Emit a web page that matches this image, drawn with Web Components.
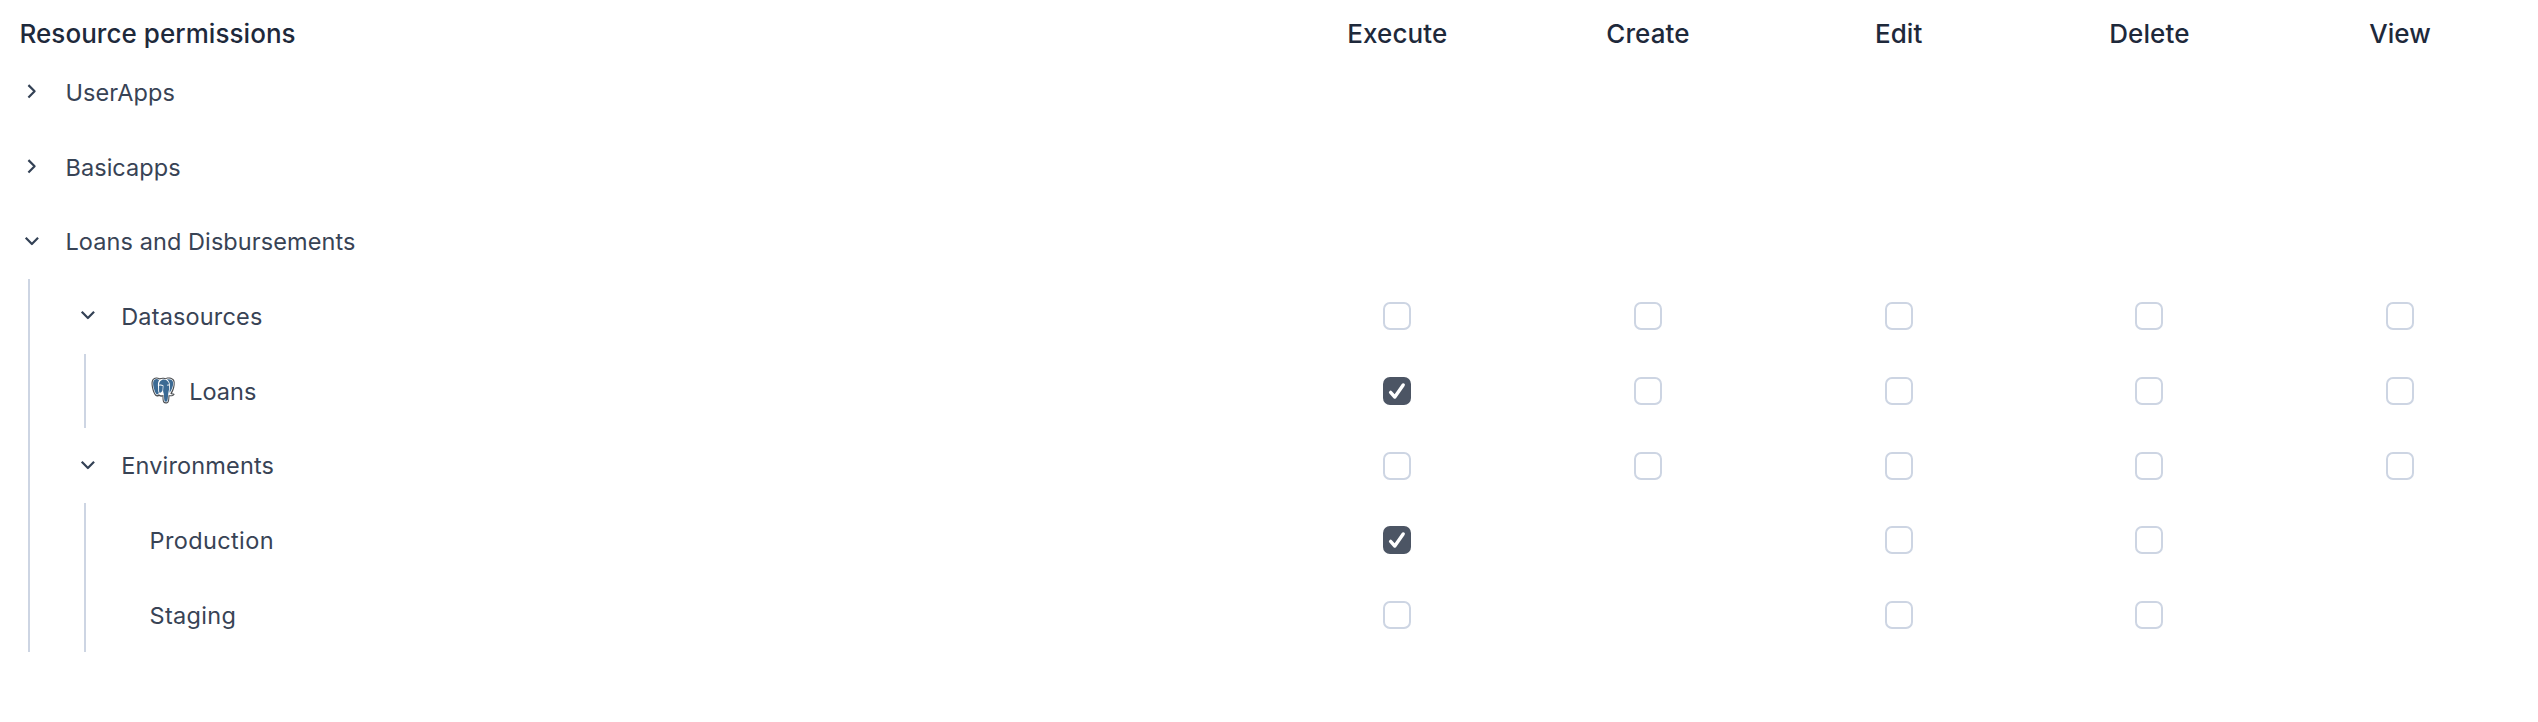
<!DOCTYPE html>
<html lang="en">
<head>
<meta charset="utf-8">
<title>Resource permissions</title>
<style>
  html, body { margin: 0; background: #fff; }
  body { font-family: Inter, "Liberation Sans", sans-serif; }
</style>
</head>
<body>
<permission-table>
  <permission-header slot="header" columns="Execute,Create,Edit,Delete,View">Resource permissions</permission-header>
  <permission-row toggle="closed" style="--start:20px;--tracking:.07px">UserApps</permission-row>
  <permission-row toggle="closed" style="--start:20px;--tracking:.05px">Basicapps</permission-row>
  <permission-row toggle="open" style="--start:20px;--tracking:.08px">Loans and Disbursements</permission-row>
  <permission-group style="--indent:28px">
    <permission-row toggle="open" cells="00000" style="--start:45.7px;--tracking:.16px">Datasources</permission-row>
    <permission-group style="--indent:54px">
      <permission-row cells="10000" style="--start:65px"><postgres-icon slot="icon"></postgres-icon>Loans</permission-row>
    </permission-group>
    <permission-row toggle="open" cells="00000" style="--start:45.7px;--tracking:.16px">Environments</permission-row>
    <permission-group style="--indent:54px">
      <permission-row cells="1-00-" style="--start:63.5px;--tracking:.38px">Production</permission-row>
      <permission-row cells="0-00-" style="--start:63.5px;--tracking:.32px">Staging</permission-row>
    </permission-group>
  </permission-group>
</permission-table>

<script>
const define = (name, html, setup) => customElements.define(name, class extends HTMLElement {
  constructor() {
    super();
    this.attachShadow({ mode: 'open' }).innerHTML = html;
  }
  connectedCallback() { if (setup) setup(this, this.shadowRoot); }
});

define('permission-table', `
  <style>
    :host { display: block; box-sizing: border-box; padding-right: 12.6px; }
  </style>
  <slot name="header"></slot><slot></slot>`);

define('permission-header', `
  <style>
    :host { display: flex; height: 55px; color: #1e293b; font-size: 26px; font-weight: 500; line-height: 32px; }
    .title { flex: 1; padding: 18px 0 0 19.5px; letter-spacing: .05px; }
    .col { width: 250.7px; padding-top: 18px; text-align: center; letter-spacing: .1px; }
  </style>
  <div class="title"><slot></slot></div>`, (el, root) => {
  for (const label of el.getAttribute('columns').split(',')) {
    const col = document.createElement('div');
    col.className = 'col';
    col.textContent = label;
    root.append(col);
  }
});

define('permission-group', `
  <style>
    :host { display: block; margin-left: var(--indent); border-left: 2px solid #cdd5e3; }
  </style>
  <slot></slot>`);

define('permission-row', `
  <style>
    :host { display: flex; align-items: center; height: 74.67px; color: #384355; font-size: 23.5px; line-height: 32px; }
    .name { flex: 1; display: flex; align-items: center; padding-left: var(--start); white-space: nowrap; letter-spacing: var(--tracking, 0); }
    .text { padding-top: 1.5px; }
    toggle-chevron { margin-right: 21.5px; }
    .cell { width: 250.7px; display: flex; justify-content: center; }
  </style>
  <div class="name"><slot name="icon"></slot><span class="text"><slot></slot></span></div>`, (el, root) => {
  const toggle = el.getAttribute('toggle');
  if (toggle) {
    const chevron = document.createElement('toggle-chevron');
    chevron.setAttribute('state', toggle);
    root.querySelector('.name').prepend(chevron);
  }
  for (const state of el.getAttribute('cells') || '') {
    const cell = document.createElement('div');
    cell.className = 'cell';
    if (state !== '-') {
      const box = document.createElement('check-box');
      if (state === '1') box.setAttribute('checked', '');
      cell.append(box);
    }
    root.append(cell);
  }
});

define('toggle-chevron', `
  <style>
    :host { display: block; width: 24px; height: 24px; }
    svg { display: block; }
    path { fill: none; stroke: #334155; stroke-width: 2.2; stroke-linejoin: round; stroke-linecap: square; }
  </style>
  <svg width="24" height="24" viewBox="0 0 24 24"><path/></svg>`, (el, root) => {
  root.querySelector('path').setAttribute('d', el.getAttribute('state') === 'open'
    ? 'M6.5 8.6L11.9 14L17.3 8.6' : 'M9.2 5.9L14.6 11.3L9.2 16.7');
});

define('check-box', `
  <style>
    :host { display: block; box-sizing: border-box; width: 28px; height: 28px; border: 2px solid #cdd5e3; border-radius: 7px; }
    :host([checked]) { border: 0; background: #4c5564; }
    svg { display: none; }
    :host([checked]) svg { display: block; }
  </style>
  <svg width="28" height="28" viewBox="0 0 28 28"><path d="M7.6 15.4L11.8 20L20.2 8" fill="none" stroke="#fff" stroke-width="3.4" stroke-linecap="round" stroke-linejoin="round"/></svg>`);

define('postgres-icon', `
  <style>
    :host { display: block; width: 24px; height: 27px; margin-right: 14.2px; }
    svg { display: block; }
  </style>
  <svg width="24" height="27" viewBox="0 0 24 27">
    <path d="M5.2.6C2 .8.5 3.300.5 6.800.7 11.300 2.500 16.700 4.400 18.800 5.500 19.900 7 19.700 8 18.900 9 19.600 10.600 19.800 11.500 19.500 11.400 22 11.600 24.200 12.400 25.500 13.500 26.900 16.400 26.800 17.500 25.200 18.400 23.800 18.300 21.700 18.500 19.300 20.600 19.500 22.700 18.900 23.700 17.200 23 16.200 21.700 16.600 21 16.300 22.800 13.300 24 8.500 23.700 5.200 23.400 2.100 20.800.5 17.400.6 16 .7 15.200 1 14.300 1.200 12.200.5 10.200.8 8.600 1.300 7.400.8 6.300.5 5.200.6Z" fill="#4a4d51"/>
    <path d="M5.200 1.500C2.700 1.700 1.500 3.700 1.600 6.800 1.800 10.900 3.500 16.100 5.100 17.800 6 18.700 7 17.900 8 17.300 9.200 18.500 11 18.300 12.500 18 12.500 20.800 12.400 23.300 13.200 24.600 14 25.700 16 25.500 16.700 24.400 17.500 23.100 17.200 20.800 17.500 18.200 19.700 18.500 21.500 18.200 22.600 17.400 21.200 17.500 20.200 17.400 19.300 16.500 21.600 13.200 23 8.700 22.700 5.500 22.300 2.800 20.200 1.500 17.400 1.600 16 1.700 15.200 2 14.200 2.300 12.200 1.500 10.300 1.700 8.700 2.400 7.500 1.800 6.500 1.500 5.200 1.500Z" fill="#fff"/>
    <path d="M5.300 2C3 2.200 2 4.100 2.100 6.800 2.300 10.600 4 15.600 5.500 17.200 6.200 17.800 7.200 16.900 7.900 16 6.900 14.500 7.300 12.500 7.100 10.500 6.800 7.800 6.700 5 8.200 3 7.200 2.300 6.200 2 5.300 2Z" fill="#3b6a94"/>
    <path d="M8 7.700C8.200 5 10 2.500 12.900 2.500 16.300 2.600 18.200 5.500 18.200 8.600 18.100 10.600 18.300 12.500 17.600 14.500 16.900 17.500 17.100 22 16.300 23.900 15.600 25 14.100 24.900 13.600 23.900 12.700 22 13.300 18.800 12.700 16.500 12.300 15.500 12.100 14.800 12.100 13.800L12.500 8.400C11.300 7.600 9.500 7.300 8 7.700Z" fill="#3b6a94"/>
    <path d="M7.900 8.700C9.300 8.300 10.800 8.400 11.800 9.100L11.500 13.300C10.900 14.700 9.700 16.300 8.500 15.700 7.600 14.300 8.400 11.500 7.900 8.700Z" fill="#3b6a94"/>
    <path d="M15.800 2.300C19 1.700 21.900 2.800 22.200 5.600 22.500 8.900 20.700 13 18.600 15.800 18.300 13.500 19.300 10.500 19 8.300 18.700 5.600 17.700 3.600 15.800 2.300Z" fill="#3b6a94"/>
    <path d="M16.200 8.200L18.200 7.900" stroke="#fff" stroke-width="1"/>
  </svg>`);
</script>
</body>
</html>
